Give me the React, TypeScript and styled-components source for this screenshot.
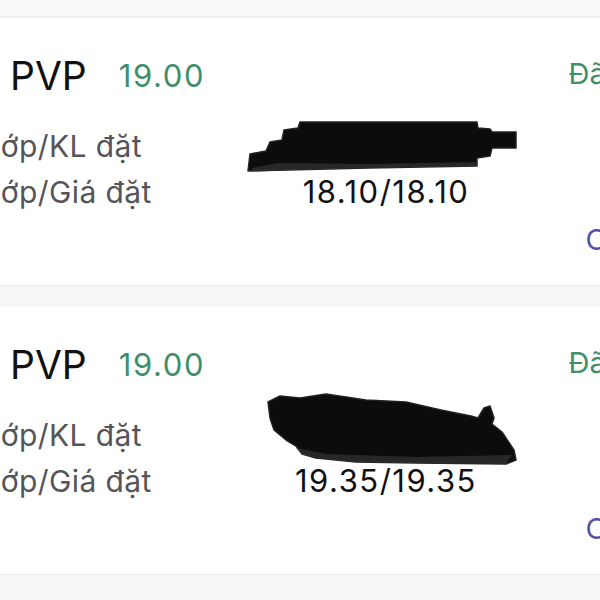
import React from 'react';
import styled, { createGlobalStyle } from 'styled-components';

const GlobalStyle = createGlobalStyle`
  html, body {
    margin: 0;
    padding: 0;
    background: #f6f6f6;
  }
  body {
    font-family: Inter, "Noto Sans", "Liberation Sans", sans-serif;
    -webkit-font-smoothing: antialiased;
  }
`;

const Screen = styled.div`
  width: 600px;
  height: 600px;
  overflow: hidden;
  background: #f6f6f6;
`;

const TopBar = styled.div`
  height: 16px;
  background: #fafafa;
  border-bottom: 1px solid #ececec;
  margin-bottom: 1px;
`;

// the screenshot is cropped on both sides, so the list is wider than the window
const OrderList = styled.div`
  margin-left: -40px;
  width: 730px;
  display: flex;
  flex-direction: column;
  gap: 21px;
`;

const OrderCard = styled.div`
  box-sizing: border-box;
  height: 268px;
  background: #fff;
  border-bottom: 1px solid #ececec;
  padding: 38px 8px 23px 6px;
  display: flex;
  flex-direction: column;
`;

const Row = styled.div`
  display: grid;
  grid-template-columns: 292px 256px 1fr;
`;

const Header = styled(Row)`
  height: 39px;
  align-items: center;
`;

const Body = styled(Row)`
  margin-top: 28px;
`;

const TitleCell = styled.div`
  display: flex;
  align-items: center;
`;

const SideTag = styled.span`
  width: 30px;
  margin-right: 14px;
  font-size: 14px;
  color: #3f8f6b;
`;

const Ticker = styled.span`
  font-size: 39px;
  line-height: 39px;
  color: #111;
`;

const Price = styled.span`
  margin-left: 32px;
  font-size: 31px;
  line-height: 39px;
  letter-spacing: 1.6px;
  color: #3f8f6b;
`;

const Status = styled.div`
  text-align: right;
  font-size: 29px;
  line-height: 39px;
  color: #3f8f6b;
  white-space: nowrap;
  margin-top: -4px;
`;

const Column = styled.div<{ $align?: 'left' | 'center' }>`
  display: flex;
  flex-direction: column;
  align-items: ${(p) => (p.$align === 'center' ? 'center' : 'flex-start')};
`;

const LabelColumn = styled(Column)`
  margin-left: -4px;
`;

const Label = styled.div`
  font-size: 30px;
  line-height: 46px;
  letter-spacing: 0.4px;
  color: #555559;
  white-space: nowrap;
`;

const Value = styled.div`
  font-size: 31px;
  line-height: 46px;
  letter-spacing: 1.5px;
  color: #111;
  white-space: nowrap;
`;

const RedactSlot = styled.div`
  align-self: stretch;
  height: 46px;
  position: relative;
`;

const Scribble = styled.svg<{ $top: number; $left: number }>`
  position: absolute;
  top: ${(p) => p.$top}px;
  left: ${(p) => p.$left}px;
  overflow: visible;
`;

const Footer = styled.div`
  margin-top: 2px;
  text-align: right;
  font-size: 29px;
  line-height: 46px;
  color: #5a4fa3;
  white-space: nowrap;
`;

const scribbles = [
  {
    top: -5,
    left: -10,
    width: 270,
    height: 56,
    d: 'M0,53 L2,36 L18,33 L22,24 L34,22 L36,12 L50,10 L52,4 L229,4 L230,10 L242,11 L244,14 L268,14 L268,30 L244,30 L242,38 L229,40 L229,48 L120,50 L40,52 Z',
    shade: 'M4,50 L30,45 L120,46 L229,44 L229,48 L120,50 L40,52 L4,54 Z',
  },
  {
    top: -20,
    left: 8,
    width: 252,
    height: 76,
    d: 'M2,10 L14,4 L34,6 L60,2 L100,8 L140,10 L175,18 L205,24 L212,26 L218,16 L224,14 L228,26 L226,32 L236,40 L248,58 L250,68 L240,72 L150,71 L90,70 L50,66 L36,62 L30,54 L20,48 L8,38 L4,26 Z',
    shade: 'M30,56 L60,62 L150,65 L246,63 L240,72 L150,71 L90,70 L50,66 L36,62 Z',
  },
];

const orders = [
  { side: 'Mua', ticker: 'PVP', price: '19.00', status: 'Đã khớp', filled: '18.10/18.10' },
  { side: 'Mua', ticker: 'PVP', price: '19.00', status: 'Đã khớp', filled: '19.35/19.35' },
];

const Redacted = ({ index }: { index: number }) => {
  const s = scribbles[index];
  return (
    <RedactSlot>
      <Scribble $top={s.top} $left={s.left} width={s.width} height={s.height} viewBox={`0 0 ${s.width} ${s.height}`}>
        <path d={s.d} fill="#0c0c0c" stroke="#222" strokeWidth="1.5" strokeLinejoin="round" />
        <path d={s.shade} fill="#3a3a3a" opacity="0.6" />
      </Scribble>
    </RedactSlot>
  );
};

export default function App() {
  return (
    <Screen>
      <GlobalStyle />
      <TopBar />
      <OrderList>
        {orders.map((o, i) => (
          <OrderCard key={i}>
            <Header>
              <TitleCell>
                <SideTag>{o.side}</SideTag>
                <Ticker>{o.ticker}</Ticker>
                <Price>{o.price}</Price>
              </TitleCell>
              <div />
              <Status>{o.status}</Status>
            </Header>
            <Body>
              <LabelColumn>
                <Label>Khớp/KL đặt</Label>
                <Label>Khớp/Giá đặt</Label>
              </LabelColumn>
              <Column $align="center">
                <Redacted index={i} />
                <Value>{o.filled}</Value>
              </Column>
              <div />
            </Body>
            <Footer>Chi tiết</Footer>
          </OrderCard>
        ))}
      </OrderList>
    </Screen>
  );
}
